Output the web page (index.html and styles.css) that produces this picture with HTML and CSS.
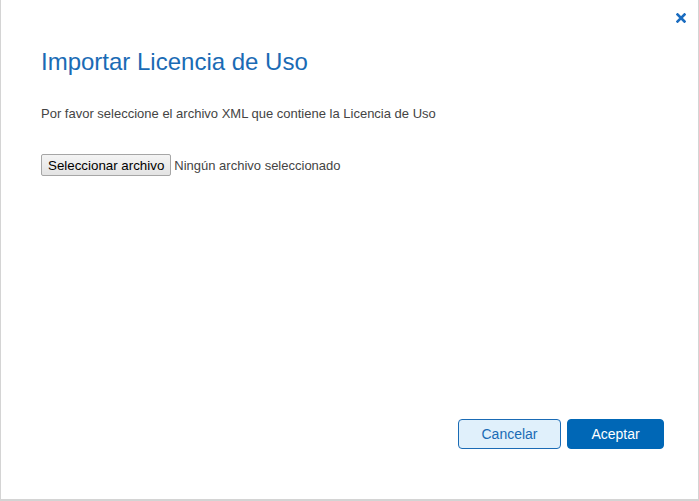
FILE: index.html
```html
<!DOCTYPE html>
<html lang="es">
<head>
    <meta charset="UTF-8">
    <meta name="viewport" content="width=device-width, initial-scale=1.0">
    <title>Importar Licencia de Uso</title>
    <link rel="stylesheet" href="styles.css">
</head>
<body>
    <div class="dialog">
        <div class="dialog-top">
            <svg class="close" width="10" height="10" viewBox="0 0 10 10">
                <path d="M1.5 1.5 L8.5 8.5 M8.5 1.5 L1.5 8.5" stroke="#1a6cc0" stroke-width="2.6" stroke-linecap="square"/>
            </svg>
        </div>
        <div class="dialog-body">
            <h1>Importar Licencia de Uso</h1>
            <p>Por favor seleccione el archivo XML que contiene la Licencia de Uso</p>
            <div class="file-row">
                <button class="file-btn">Seleccionar archivo</button>
                <span class="file-name">Ningún archivo seleccionado</span>
            </div>
        </div>
        <div class="dialog-footer">
            <button class="btn btn-cancel">Cancelar</button>
            <button class="btn btn-ok">Aceptar</button>
        </div>
    </div>
</body>
</html>
```

FILE: styles.css
```css
html, body {
    margin: 0;
    height: 100%;
}
body {
    background-color: #ffffff;
    font-family: "Liberation Sans", Arial, sans-serif;
    color: #444;
}
.dialog {
    box-sizing: border-box;
    width: 699px;
    height: 501px;
    border-left: 1px solid #d4d4d4;
    border-right: 1px solid #d4d4d4;
    border-bottom: 2px solid #d4d4d4;
    display: flex;
    flex-direction: column;
}
.dialog-top {
    display: flex;
    justify-content: flex-end;
    padding: 13px 12px 0 0;
    height: 14px;
}
.close {
    display: block;
    cursor: pointer;
}
.dialog-body {
    flex: 1;
    padding: 0 40px;
}
.dialog-body h1 {
    font-weight: normal;
    font-size: 24px;
    color: #1a6bb5;
    margin: 20px 0 0 0;
    line-height: 30px;
}
.dialog-body p {
    font-size: 13px;
    margin: 29px 0 0 0;
    line-height: 16px;
}
.file-row {
    margin-top: 32px;
    display: flex;
    align-items: center;
    font-size: 13px;
}
.file-btn {
    font-family: "Liberation Sans", Arial, sans-serif;
    font-size: 13.33px;
    color: #000;
    background: linear-gradient(#f4f4f4, #e3e3e3);
    border: 1px solid #a6a6a6;
    border-radius: 2px;
    height: 22px;
    padding: 0 6px;
    margin-right: 3px;
}
.file-name {
    color: #444;
}
.dialog-footer {
    display: flex;
    justify-content: flex-end;
    gap: 6px;
    padding: 0 34px 50px 0;
}
.btn {
    font-family: "Liberation Sans", Arial, sans-serif;
    font-size: 14px;
    height: 30px;
    border-radius: 4px;
    cursor: pointer;
}
.btn-cancel {
    width: 103px;
    background-color: #e0f0fb;
    border: 1px solid #1a6bb5;
    color: #1a6bb5;
}
.btn-ok {
    width: 97px;
    background-color: #0067b6;
    border: 1px solid #0067b6;
    color: #ffffff;
}
```
